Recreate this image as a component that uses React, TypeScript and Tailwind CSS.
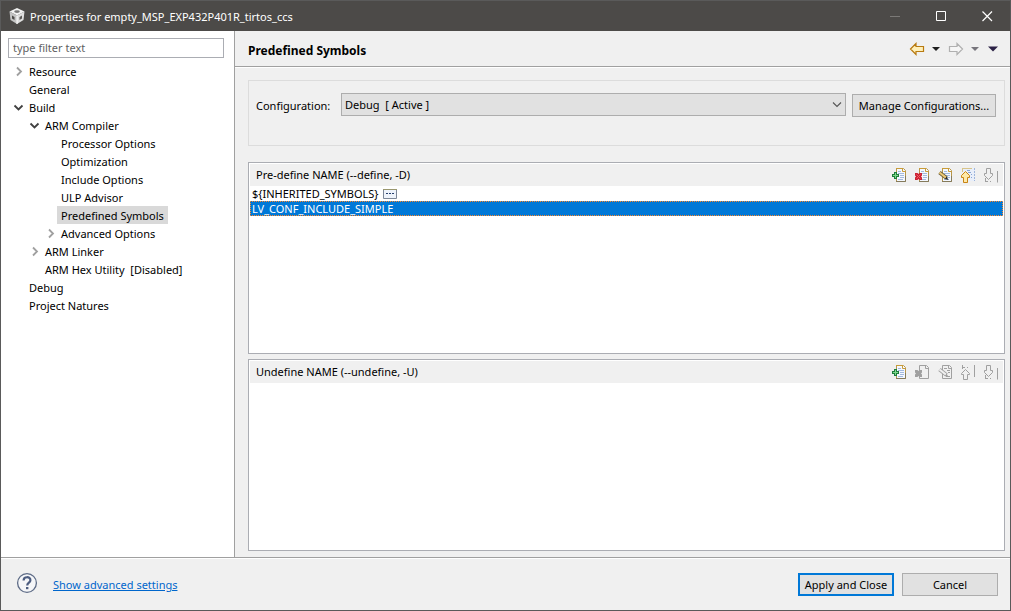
import type { ReactNode } from "react";

type Node = {
  label: string;
  level: number;
  state?: "open" | "closed";
  selected?: boolean;
};

const tree: Node[] = [
  { label: "Resource", level: 0, state: "closed" },
  { label: "General", level: 0 },
  { label: "Build", level: 0, state: "open" },
  { label: "ARM Compiler", level: 1, state: "open" },
  { label: "Processor Options", level: 2 },
  { label: "Optimization", level: 2 },
  { label: "Include Options", level: 2 },
  { label: "ULP Advisor", level: 2 },
  { label: "Predefined Symbols", level: 2, selected: true },
  { label: "Advanced Options", level: 2, state: "closed" },
  { label: "ARM Linker", level: 1, state: "closed" },
  { label: "ARM Hex Utility  [Disabled]", level: 1 },
  { label: "Debug", level: 0 },
  { label: "Project Natures", level: 0 },
];

const indents = ["pl-3", "pl-7", "pl-11"];

function Chevron({ open }: { open: boolean }) {
  return (
    <svg width="12" height="12" viewBox="0 0 12 12" fill="none" aria-hidden="true">
      {open ? (
        <path d="M1.5 4.5 5.5 8.5 9.5 4.5" stroke="#404040" strokeWidth="1.8" />
      ) : (
        <path d="M4 2.5 8 6.5 4 10.5" stroke="#a0a0a0" strokeWidth="1.8" />
      )}
    </svg>
  );
}

function TreeRow({ label, level, state, selected }: Node) {
  return (
    <li
      role="treeitem"
      aria-level={level + 1}
      aria-selected={!!selected}
      aria-expanded={state ? state === "open" : undefined}
      className={`flex h-[18px] items-center ${indents[level]}`}
    >
      {state ? (
        <button type="button" aria-label={`Toggle ${label}`} className="h-3 w-3 shrink-0">
          <Chevron open={state === "open"} />
        </button>
      ) : (
        <span className="w-3 shrink-0" />
      )}
      <button
        type="button"
        className={`h-[18px] px-1 text-left whitespace-pre ${selected ? "bg-[#d9d9d9]" : ""}`}
      >
        {label}
      </button>
    </li>
  );
}

function Icon({ children }: { children: ReactNode }) {
  return (
    <svg width="16" height="16" viewBox="0 0 16 16" fill="none" aria-hidden="true">
      {children}
    </svg>
  );
}

function Doc({ off }: { off?: boolean }) {
  return (
    <>
      <path
        d="M5.5 1.5H12.5L14.5 3.5V14.5H5.5Z"
        fill={off ? "#f0f0f0" : "#f4f8ff"}
        stroke={off ? "#a0a0a0" : "#b8964a"}
      />
      {!off && <path d="M5 1.5H12" stroke="#c99c38" />}
      {!off && <path d="M5 14.5H14.5V9" stroke="#857b5c" />}
      <path d="M11.5 1.5V4.5H14.5" stroke={off ? "#a0a0a0" : "#c99c38"} />
    </>
  );
}

function Lines() {
  return <path d="M7 4.5H10M7 6.5H13M9 8.5H13M9 10.5H13M7 12.5H12" stroke="#a3b9de" />;
}

function AddIcon() {
  return (
    <Icon>
      <Doc />
      <Lines />
      <path d="M3 5H6V7H8V10H6V12H3V10H1V7H3Z" fill="#1e7d3c" />
      <path d="M4.5 6V11M2 8.5H7" stroke="#7ed98c" />
    </Icon>
  );
}

function DeleteIcon({ off }: { off?: boolean }) {
  return (
    <Icon>
      <Doc off={off} />
      {!off && <Lines />}
      <path
        d="M1 6H3.5L4.5 7 5.5 6H8V8.5L7 9.5 8 10.5V13H5.5L4.5 12 3.5 13H1V10.5L2 9.5 1 8.5Z"
        fill={off ? "#a0a0a0" : "#cc2233"}
      />
      {!off && <path d="M2.5 7.5 6.5 11.5M6.5 7.5 2.5 11.5" stroke="#ee5a62" />}
    </Icon>
  );
}

function EditIcon({ off }: { off?: boolean }) {
  return (
    <Icon>
      <Doc off={off} />
      {off ? (
        <path d="M7 4.5H10M10 6.5H13M11 8.5H13M9 12.5H13" stroke="#a0a0a0" />
      ) : (
        <Lines />
      )}
      <path d="M2.5 5.5 9.5 11" stroke={off ? "#a0a0a0" : "#6b5c38"} strokeWidth="3.8" />
      <path d="M2.5 5.5 9 10.6" stroke={off ? "#f0f0f0" : "#ecc976"} strokeWidth="2" />
      <path d="M9.5 9.5 11.5 13 8 12Z" fill={off ? "#a0a0a0" : "#2c2c2c"} />
    </Icon>
  );
}

function UpIcon({ off }: { off?: boolean }) {
  return off ? (
    <Icon>
      <path d="M5.5 5.5 9.5 9.5V10.5H7.5V15.5H3.5V10.5H1.5V9.5Z" stroke="#a0a0a0" />
      <path d="M2.5 1V5M2.5 3.5H5M7 3.5H8M14.5 1V13" stroke="#a0a0a0" />
    </Icon>
  ) : (
    <Icon>
      <path d="M3 1H15V14H3Z" fill="#e9effa" />
      <path d="M2.5 1V5M3 1.5H12" stroke="#d8c48a" />
      <path d="M7 3.5H10M8 5.5H11M11 7.5H12M11 10.5H12" stroke="#8aa6d4" />
      <path d="M14.5 1V14" stroke="#9fb6dc" strokeDasharray="2 1" />
      <path
        d="M5.5 4.5 9.5 8.5V10.5H7.5V15.5H3.5V10.5H1.5V8.5Z"
        fill="#ffe9a8"
        stroke="#c88413"
      />
    </Icon>
  );
}

function DownIcon() {
  return (
    <Icon>
      <path d="M3.5 1.5H7.5V6.5H9.5V8.5L5.5 12.5 1.5 8.5V6.5H3.5Z" stroke="#a0a0a0" />
      <path d="M2.5 11V15M2.5 14.5H5M7 14.5H8M14.5 4V15.5" stroke="#a0a0a0" />
    </Icon>
  );
}

function Tool({ label, disabled, children }: { label: string; disabled?: boolean; children: ReactNode }) {
  return (
    <button type="button" aria-label={label} disabled={disabled} className="h-4 w-4">
      {children}
    </button>
  );
}

function Panel({ title, filled, children }: { title: string; filled: boolean; children?: ReactNode }) {
  return (
    <section className="flex flex-1 flex-col border border-[#abadb3] bg-white p-px">
      <header className="flex h-[22px] items-center justify-between bg-[#f0f0f0] pr-1 pl-1.5">
        <h2 className="pb-0.5">{title}</h2>
        <div className="flex gap-[7px]">
          <Tool label="Add"><AddIcon /></Tool>
          <Tool label="Delete" disabled={!filled}><DeleteIcon off={!filled} /></Tool>
          <Tool label="Edit" disabled={!filled}><EditIcon off={!filled} /></Tool>
          <Tool label="Move up" disabled={!filled}><UpIcon off={!filled} /></Tool>
          <Tool label="Move down" disabled><DownIcon /></Tool>
        </div>
      </header>
      <ul>{children}</ul>
    </section>
  );
}

function Arrow({ back }: { back?: boolean }) {
  return (
    <svg width="16" height="14" viewBox="0 0 16 14" aria-hidden="true">
      {back ? (
        <path d="M1.5 7 7 1.5V4.5H14.5V9.5H7V12.5Z" fill="#fff0b8" stroke="#b87a10" strokeWidth="1.2" />
      ) : (
        <path d="M14.5 7 9 1.5V4.5H1.5V9.5H9V12.5Z" fill="#f6f6f6" stroke="#b0b0b0" strokeWidth="1.2" />
      )}
    </svg>
  );
}

function Triangle({ tone }: { tone: "dark" | "gray" | "menu" }) {
  const fill = tone === "dark" ? "#1e1e1e" : tone === "gray" ? "#77757c" : "#2b2145";
  return (
    <svg width="10" height="6" viewBox="0 0 10 6" aria-hidden="true">
      <path d={tone === "menu" ? "M0 0.5H10L5 5.5Z" : "M1 1H9L5 5Z"} fill={fill} />
    </svg>
  );
}

function AppIcon() {
  return (
    <svg width="18" height="18" viewBox="0 0 18 18" aria-hidden="true">
      <path d="M9 1 16.5 4.5 9 8.5 1.5 4.5Z" fill="#f2f2f2" />
      <path d="M1.5 4.5 9 8.5V17L2.5 13Z" fill="#c4c4c4" />
      <path d="M16.5 4.5 9 8.5V17L15.5 13Z" fill="#dedede" />
      <ellipse cx="9" cy="4.6" rx="2.8" ry="1.4" fill="#777" />
      <path d="M4 8.5 6.5 10V13L4 11.5Z" fill="#4c4a48" />
      <path d="M14 8.5 11.5 10V13L14 11.5Z" fill="#5c5a58" />
      <path d="M9 8.5V17" stroke="#fff" />
    </svg>
  );
}

const pushButton = "h-[23px] border border-[#adadad] bg-[#e1e1e1] text-center";

export default function App() {
  return (
    <div className="flex min-h-screen flex-col border border-[#5a5a5a] bg-[#f0f0f0] font-['Noto_Sans',sans-serif] text-[11px] leading-[15px] text-black">
      <header className="flex h-[30px] items-center justify-between bg-[#4c4a48] pl-[7px] text-white">
        <div className="flex items-center gap-1">
          <AppIcon />
          <h1>Properties for empty_MSP_EXP432P401R_tirtos_ccs</h1>
        </div>
        <div className="flex">
          <button type="button" aria-label="Minimize" disabled className="flex h-[30px] w-[46px] items-center justify-center">
            <svg width="11" height="11" viewBox="0 0 11 11"><path d="M0 5.5H10" stroke="#7b7977" /></svg>
          </button>
          <button type="button" aria-label="Maximize" className="flex h-[30px] w-[46px] items-center justify-center">
            <svg width="11" height="11" viewBox="0 0 11 11"><path d="M.5 .5H9.5V9.5H.5Z" fill="none" stroke="#fff" /></svg>
          </button>
          <button type="button" aria-label="Close" className="flex h-[30px] w-[46px] items-center justify-center">
            <svg width="11" height="11" viewBox="0 0 11 11"><path d="M.5 .5 10 10M10 .5 .5 10" stroke="#fff" strokeWidth="1.2" /></svg>
          </button>
        </div>
      </header>

      <div className="flex flex-1">
        <nav className="w-[234px] shrink-0 border-r border-[#a0a0a0] bg-white">
          <div className="pt-[7px] pr-[10px] pl-[7px]">
            <input
              type="text"
              aria-label="Filter"
              placeholder="type filter text"
              className="block h-5 w-full border border-[#abadb3] bg-white px-1 pb-0.5 text-black outline-none placeholder:text-[#5f5f5f]"
            />
          </div>
          <ul role="tree" aria-label="Property pages" className="pt-1">
            {tree.map((node) => (
              <TreeRow key={node.label} {...node} />
            ))}
          </ul>
        </nav>

        <main className="flex min-w-0 flex-1 flex-col">
          <div className="flex h-[36px] items-center justify-between border-b border-[#a0a0a0] pr-3 pl-[13px]">
            <h2 className="pt-1 text-[12px] font-bold">Predefined Symbols</h2>
            <div className="flex items-center">
              <button type="button" aria-label="Back" className="mr-1.5"><Arrow back /></button>
              <button type="button" aria-label="Back history" className="mr-[7px]"><Triangle tone="dark" /></button>
              <button type="button" aria-label="Forward" disabled className="mr-1.5"><Arrow /></button>
              <button type="button" aria-label="Forward history" disabled className="mr-2"><Triangle tone="gray" /></button>
              <button type="button" aria-label="View menu"><Triangle tone="menu" /></button>
            </div>
          </div>

          <div className="flex flex-1 flex-col border-t border-white pt-3 pr-[5px] pb-1.5 pl-[13px]">
            <div className="mb-4 flex h-[66px] items-start border border-[#dcdcdc] pt-3 pr-2 pl-[7px]">
              <label htmlFor="configuration" className="w-[85px] shrink-0 pt-[5px]">Configuration:</label>
              <div className="relative mr-1.5 flex-1">
                <select
                  id="configuration"
                  className="block h-[23px] w-full appearance-none border border-[#adadad] bg-[#e1e1e1] px-[3px] whitespace-pre outline-none"
                >
                  <option>{"Debug\u00a0 [ Active ]"}</option>
                </select>
                <svg className="pointer-events-none absolute top-2 right-1" width="10" height="8" viewBox="0 0 10 8" fill="none" aria-hidden="true">
                  <path d="M1 1.5 5 5.5 9 1.5" stroke="#555" strokeWidth="1.1" />
                </svg>
              </div>
              <button type="button" className={`${pushButton} mt-px w-36`}>Manage Configurations...</button>
            </div>

            <div className="flex flex-1 flex-col gap-[5px]">
              <Panel title="Pre-define NAME (--define, -D)" filled>
                <li className="flex h-[15px] items-center gap-1 px-0.5">
                  {"${INHERITED_SYMBOLS}"}
                  <svg width="14" height="10" viewBox="0 0 14 10" aria-hidden="true">
                    <path d="M.5 .5H13.5V9.5H.5Z" fill="#eef3fb" stroke="#7c8798" />
                    <path d="M0 .5H14" stroke="#9a976f" />
                    <path d="M3 4.5H5M6 4.5H8M9 4.5H11" stroke="#26406e" />
                  </svg>
                </li>
                <li className="flex h-[15px] items-center bg-[#0078d7] px-0.5 text-white outline-1 -outline-offset-1 outline-[#ff8728] outline-dotted">
                  LV_CONF_INCLUDE_SIMPLE
                </li>
              </Panel>
              <Panel title="Undefine NAME (--undefine, -U)" filled={false} />
            </div>
          </div>
        </main>
      </div>

      <footer className="border-t border-[#a0a0a0]">
        <div className="flex h-[52px] items-center justify-between border-t border-white pr-3 pl-[15px]">
          <div className="flex items-center gap-[15px]">
            <button type="button" aria-label="Help" className="pb-1">
              <svg width="22" height="22" viewBox="0 0 22 22" fill="none" aria-hidden="true">
                <circle cx="11" cy="11" r="9.4" fill="#f5f6f8" stroke="#5d6b86" strokeWidth="1.3" />
                <path d="M7.6 8.4C7.6 4.2 14.4 4.2 14.4 8.2 14.4 10.6 11.2 10.6 11.2 13.4" stroke="#4d5d80" strokeWidth="2.2" />
                <path d="M10 15H12.4V17.2H10Z" fill="#4d5d80" />
              </svg>
            </button>
            <a href="#advanced" className="text-[#0066cc] underline">Show advanced settings</a>
          </div>
          <div className="flex gap-2">
            <button type="button" className="h-[23px] w-24 border-2 border-[#0078d7] bg-[#e1e1e1] text-center whitespace-nowrap">Apply and Close</button>
            <button type="button" className={`${pushButton} w-24`}>Cancel</button>
          </div>
        </div>
      </footer>
    </div>
  );
}
